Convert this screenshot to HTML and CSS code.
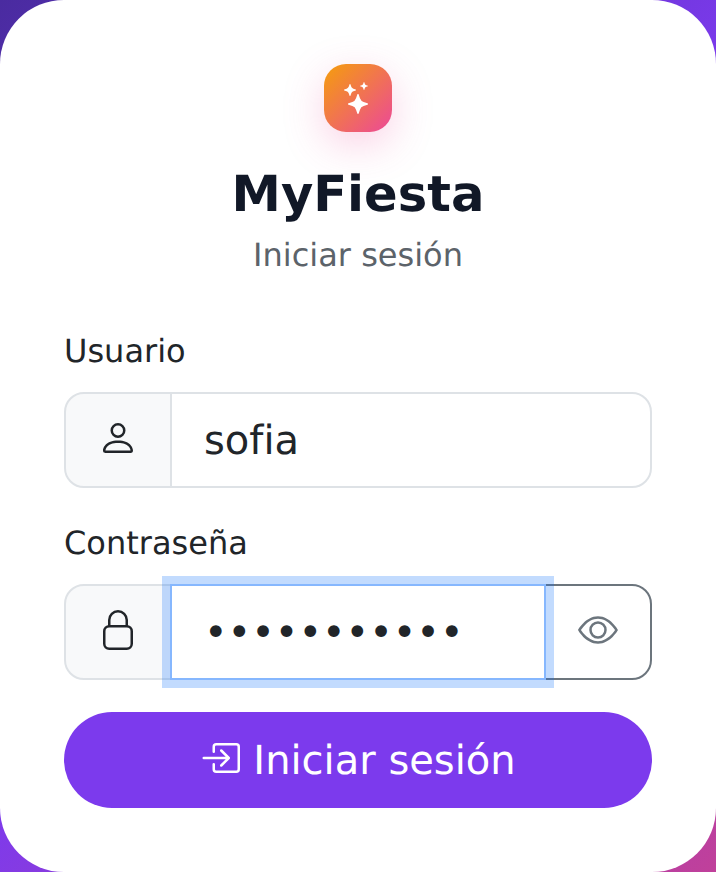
FILE: index.html
```html
<!DOCTYPE html>
<html lang="es">
<head>
  <meta charset="UTF-8" />
  <meta name="viewport" content="width=device-width, initial-scale=1" />
  <title>MyFiesta – Iniciar sesión</title>
  <link rel="stylesheet" href="styles.css">
</head>
<body>

  <main class="card">
    <header class="brand">
      <div class="logo">
        <svg class="logo-icon" viewBox="0 0 16 16" fill="currentColor" aria-hidden="true">
          <path d="M7.657 6.247c.11-.33.576-.33.686 0l.645 1.937a2.89 2.89 0 0 0 1.829 1.828l1.936.645c.33.11.33.576 0 .686l-1.937.645a2.89 2.89 0 0 0-1.828 1.829l-.645 1.936a.361.361 0 0 1-.686 0l-.645-1.937a2.89 2.89 0 0 0-1.828-1.828l-1.937-.645a.361.361 0 0 1 0-.686l1.937-.645a2.89 2.89 0 0 0 1.828-1.828zM3.794 1.148a.217.217 0 0 1 .412 0l.387 1.162c.173.518.579.924 1.097 1.097l1.162.387a.217.217 0 0 1 0 .412l-1.162.387A1.73 1.73 0 0 0 4.593 5.69l-.387 1.162a.217.217 0 0 1-.412 0L3.407 5.69A1.73 1.73 0 0 0 2.31 4.593l-1.162-.387a.217.217 0 0 1 0-.412l1.162-.387A1.73 1.73 0 0 0 3.407 2.31zM10.863.099a.145.145 0 0 1 .274 0l.258.774c.115.346.386.617.732.732l.774.258a.145.145 0 0 1 0 .274l-.774.258a1.16 1.16 0 0 0-.732.732l-.258.774a.145.145 0 0 1-.274 0l-.258-.774a1.16 1.16 0 0 0-.732-.732L9.1 2.137a.145.145 0 0 1 0-.274l.774-.258c.346-.115.617-.386.732-.732z"/>
        </svg>
      </div>
      <h1 class="title">MyFiesta</h1>
      <p class="subtitle">Iniciar sesión</p>
    </header>

    <form class="login-form">
      <label class="field-label" for="user">Usuario</label>
      <div class="input-group">
        <span class="addon">
          <svg class="icon" viewBox="0 0 16 16" fill="currentColor" aria-hidden="true">
            <path d="M8 8a3 3 0 1 0 0-6 3 3 0 0 0 0 6m2-3a2 2 0 1 1-4 0 2 2 0 0 1 4 0m4 8c0 1-1 1-1 1H3s-1 0-1-1 1-4 6-4 6 3 6 4m-1-.004c-.001-.246-.154-.986-.832-1.664C11.516 10.68 10.289 10 8 10s-3.516.68-4.168 1.332c-.678.678-.83 1.418-.832 1.664z"/>
          </svg>
        </span>
        <input class="control" type="text" id="user" name="user" value="sofia" />
      </div>

      <label class="field-label" for="password">Contraseña</label>
      <div class="input-group">
        <span class="addon">
          <svg class="icon" viewBox="0 0 16 16" fill="none" stroke="currentColor" stroke-width="1" aria-hidden="true">
            <rect x="2.5" y="6.5" width="11" height="9" rx="2"/>
            <path d="M4.5 6.5V4a3.5 3.5 0 0 1 7 0v2.5"/>
          </svg>
        </span>
        <input class="control control-focus" type="password" id="password" name="password" value="contrasena1" />
        <button class="eye-btn" type="button" aria-label="Mostrar contraseña">
          <svg class="icon" viewBox="0 0 16 16" fill="currentColor" aria-hidden="true">
            <path d="M16 8s-3-5.5-8-5.5S0 8 0 8s3 5.5 8 5.5S16 8 16 8M1.173 8a13 13 0 0 1 1.66-2.043C4.12 4.668 5.88 3.5 8 3.5s3.879 1.168 5.168 2.457A13 13 0 0 1 14.828 8q-.086.13-.195.288c-.335.48-.83 1.12-1.465 1.755C11.879 11.332 10.119 12.5 8 12.5s-3.879-1.168-5.168-2.457A13 13 0 0 1 1.172 8z"/>
            <path d="M8 5.5a2.5 2.5 0 1 0 0 5 2.5 2.5 0 0 0 0-5M4.5 8a3.5 3.5 0 1 1 7 0 3.5 3.5 0 0 1-7 0"/>
          </svg>
        </button>
      </div>

      <button class="submit" type="submit">
        <svg class="icon" viewBox="0 0 16 16" fill="currentColor" aria-hidden="true">
          <path d="M6 3.5a.5.5 0 0 1 .5-.5h8a.5.5 0 0 1 .5.5v9a.5.5 0 0 1-.5.5h-8a.5.5 0 0 1-.5-.5v-2a.5.5 0 0 0-1 0v2A1.5 1.5 0 0 0 6.5 14h8a1.5 1.5 0 0 0 1.5-1.5v-9A1.5 1.5 0 0 0 14.5 2h-8A1.5 1.5 0 0 0 5 3.5v2a.5.5 0 0 0 1 0z"/>
          <path d="M11.854 8.354a.5.5 0 0 0 0-.708l-3-3a.5.5 0 1 0-.708.708L10.293 7.5H1.5a.5.5 0 0 0 0 1h8.793l-2.147 2.146a.5.5 0 0 0 .708.708z"/>
        </svg>
        Iniciar sesión
      </button>
    </form>
  </main>

</body>
</html>
```

FILE: styles.css
```css
* {
  box-sizing: border-box;
}

body {
  margin: 0;
  min-height: 100vh;
  font-family: "DejaVu Sans", sans-serif;
  text-rendering: geometricPrecision;
  color: #212529;
  background: linear-gradient(135deg, #4a2ba0 0%, #7c3aed 50%, #c0409a 100%);
}

.card {
  height: 872px;
  padding: 64px;
  background: #fff;
  border-radius: 64px;
}

/* Logo und Titel */
.brand {
  display: flex;
  flex-direction: column;
  align-items: center;
  margin-bottom: 49px;
}

.logo {
  width: 68px;
  height: 68px;
  display: flex;
  align-items: center;
  justify-content: center;
  color: #fff;
  border-radius: 22px;
  background: linear-gradient(135deg, #f59e0b, #ec4899);
  box-shadow: 0 12px 40px rgba(236, 72, 153, 0.25);
}

.logo-icon {
  width: 32px;
  height: 32px;
}

.title {
  margin: 32px 0 0;
  font-size: 49.6px;
  line-height: 60px;
  font-weight: 700;
  color: #111827;
}

.subtitle {
  margin: 7px 0 0;
  font-size: 32px;
  line-height: 48px;
  color: #5c636a;
}

/* Formular */
.field-label {
  display: block;
  margin-bottom: 18px;
  font-size: 32px;
  line-height: 46px;
  color: #212529;
}

.input-group {
  display: flex;
  height: 96px;
  margin-bottom: 32px;
}

.addon {
  flex: none;
  width: 108px;
  display: flex;
  align-items: center;
  justify-content: center;
  background: #f8f9fa;
  border: 2px solid #dee2e6;
  border-radius: 20px 0 0 20px;
}

.icon {
  flex: none;
  width: 40px;
  height: 40px;
  display: block;
  margin-bottom: 4px;
}

.control {
  flex: 1;
  min-width: 0;
  margin-left: -2px;
  padding: 2px 32px 0;
  font-family: inherit;
  font-size: 40px;
  text-rendering: geometricPrecision;
  color: #212529;
  background: #fff;
  border: 2px solid #dee2e6;
  border-radius: 0 20px 20px 0;
  outline: none;
}

.control-focus {
  position: relative;
  z-index: 1;
  border-color: #86b7fe;
  border-radius: 0;
  box-shadow: 0 0 0 8px rgba(13, 110, 253, 0.25);
}

.eye-btn {
  flex: none;
  width: 108px;
  margin-left: -2px;
  display: flex;
  align-items: center;
  justify-content: center;
  color: #6c757d;
  background: #fff;
  border: 2px solid #6c757d;
  border-radius: 0 20px 20px 0;
}

.submit {
  width: 100%;
  height: 96px;
  padding-top: 2px;
  display: flex;
  align-items: center;
  justify-content: center;
  gap: 13px;
  font-family: inherit;
  font-size: 40px;
  text-rendering: geometricPrecision;
  color: #fff;
  background: #7c3aed;
  border: none;
  border-radius: 48px;
}

.submit .icon {
  margin-bottom: 6px;
}
```
